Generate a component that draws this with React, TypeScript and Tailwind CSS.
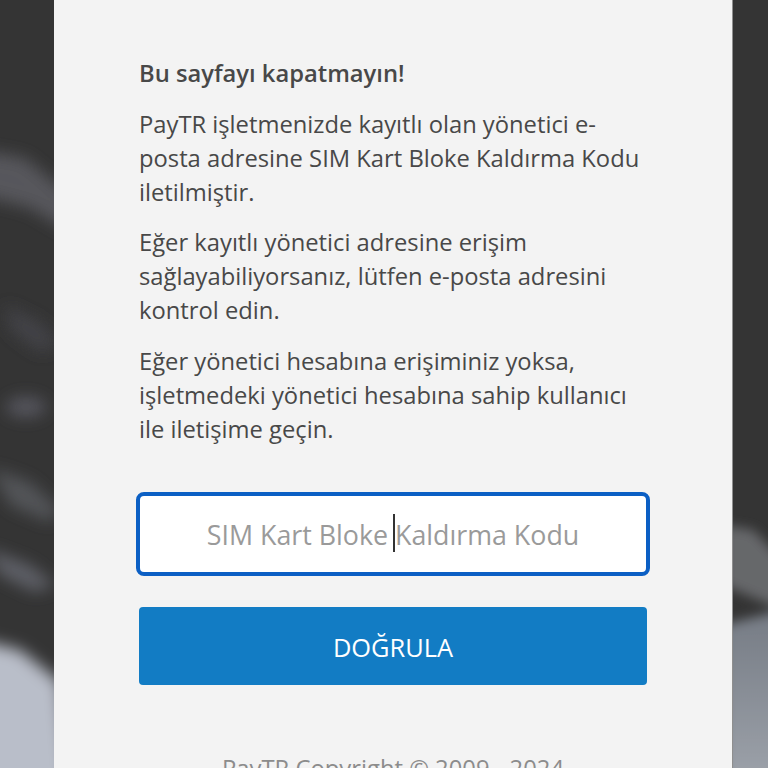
const fontStack = { fontFamily: '"Open Sans", "Noto Sans", sans-serif' }

function LeftBackdrop() {
  return (
    <svg width="54" height="768" viewBox="0 0 54 768" className="block shrink-0">
      <defs>
        <filter id="blurLeft" x="-50%" y="-20%" width="200%" height="140%">
          <feGaussianBlur stdDeviation="8" />
        </filter>
      </defs>
      <rect width="54" height="768" fill="#343434" />
      <g filter="url(#blurLeft)">
        <path d="M-20 150 L25 158 L70 195 L70 232 L30 208 L-20 195 Z" fill="#56575b" />
        <path d="M5 305 L40 322 L60 345 L40 352 L10 330 Z" fill="#424347" />
        <ellipse cx="26" cy="407" rx="20" ry="10" fill="#56575e" />
        <path d="M-10 468 L30 482 L60 510 L50 522 L10 505 Z" fill="#535459" />
        <path d="M-15 548 L30 565 L55 585 L35 592 L0 575 Z" fill="#5f6167" />
        <path d="M-30 638 L20 650 L60 682 L70 790 L-30 790 Z" fill="#b9bec9" />
      </g>
    </svg>
  )
}

function RightBackdrop() {
  return (
    <svg width="35" height="768" viewBox="0 0 35 768" className="block shrink-0">
      <defs>
        <filter id="blurRight" x="-50%" y="-20%" width="200%" height="140%">
          <feGaussianBlur stdDeviation="6" />
        </filter>
        <linearGradient id="fadeRight" x1="0" y1="0" x2="0" y2="1">
          <stop offset="0" stopColor="#757b84" />
          <stop offset="1" stopColor="#9fa4ac" />
        </linearGradient>
      </defs>
      <rect width="35" height="768" fill="#343434" />
      <g filter="url(#blurRight)">
        <path d="M-10 525 L20 530 L50 560 L50 610 L-10 585 Z" fill="#66676b" />
        <path d="M-10 625 L50 610 L50 790 L-10 790 Z" fill="url(#fadeRight)" />
      </g>
    </svg>
  )
}

export default function App() {
  return (
    <div className="flex w-[768px] h-[768px] overflow-hidden bg-[#343434]" style={fontStack}>
      <LeftBackdrop />
      <main className="w-[679px] shrink-0 h-[768px] overflow-hidden bg-[#f3f3f3] border-r border-[#8f8f8f] pl-[85px] pr-[85px] pt-[56px] text-[#484848]">
        <p className="text-[23.75px] leading-[34px] font-semibold mb-[16.5px]">Bu sayfayı kapatmayın!</p>
        <p className="text-[23.75px] leading-[34px] mb-[16.5px]">
          PayTR işletmenizde kayıtlı olan yönetici e-posta adresine SIM Kart Bloke Kaldırma Kodu iletilmiştir.
        </p>
        <p className="text-[23.75px] leading-[34px] mb-[16.5px]">
          Eğer kayıtlı yönetici adresine erişim sağlayabiliyorsanız, lütfen e-posta adresini kontrol edin.
        </p>
        <p className="text-[23.75px] leading-[34px]">
          Eğer yönetici hesabına erişiminiz yoksa, işletmedeki yönetici hesabına sahip kullanıcı ile iletişime geçin.
        </p>

        <div className="relative mt-[46px] h-[84px] -mx-[3px] pt-[3px] rounded-[8px] border-[4px] border-[#0b5fc4] bg-white flex items-center justify-center">
          <span className="text-[26.8px] text-[#9a9a9a]">SIM Kart Bloke Kaldırma Kodu</span>
          <span className="absolute left-[253px] top-[18px] w-[2px] h-[38px] bg-[#333333]" />
        </div>

        <button
          type="button"
          className="mt-[31px] block w-full h-[78px] pt-[3px] rounded-[4px] bg-[#127cc4] text-white text-[25.4px]"
        >
          DOĞRULA
        </button>

        <p className="mt-[66px] text-center text-[23.8px] leading-[34px] text-[#8c8c8c]">PayTR Copyright © 2009 - 2024</p>
      </main>
      <RightBackdrop />
    </div>
  )
}
